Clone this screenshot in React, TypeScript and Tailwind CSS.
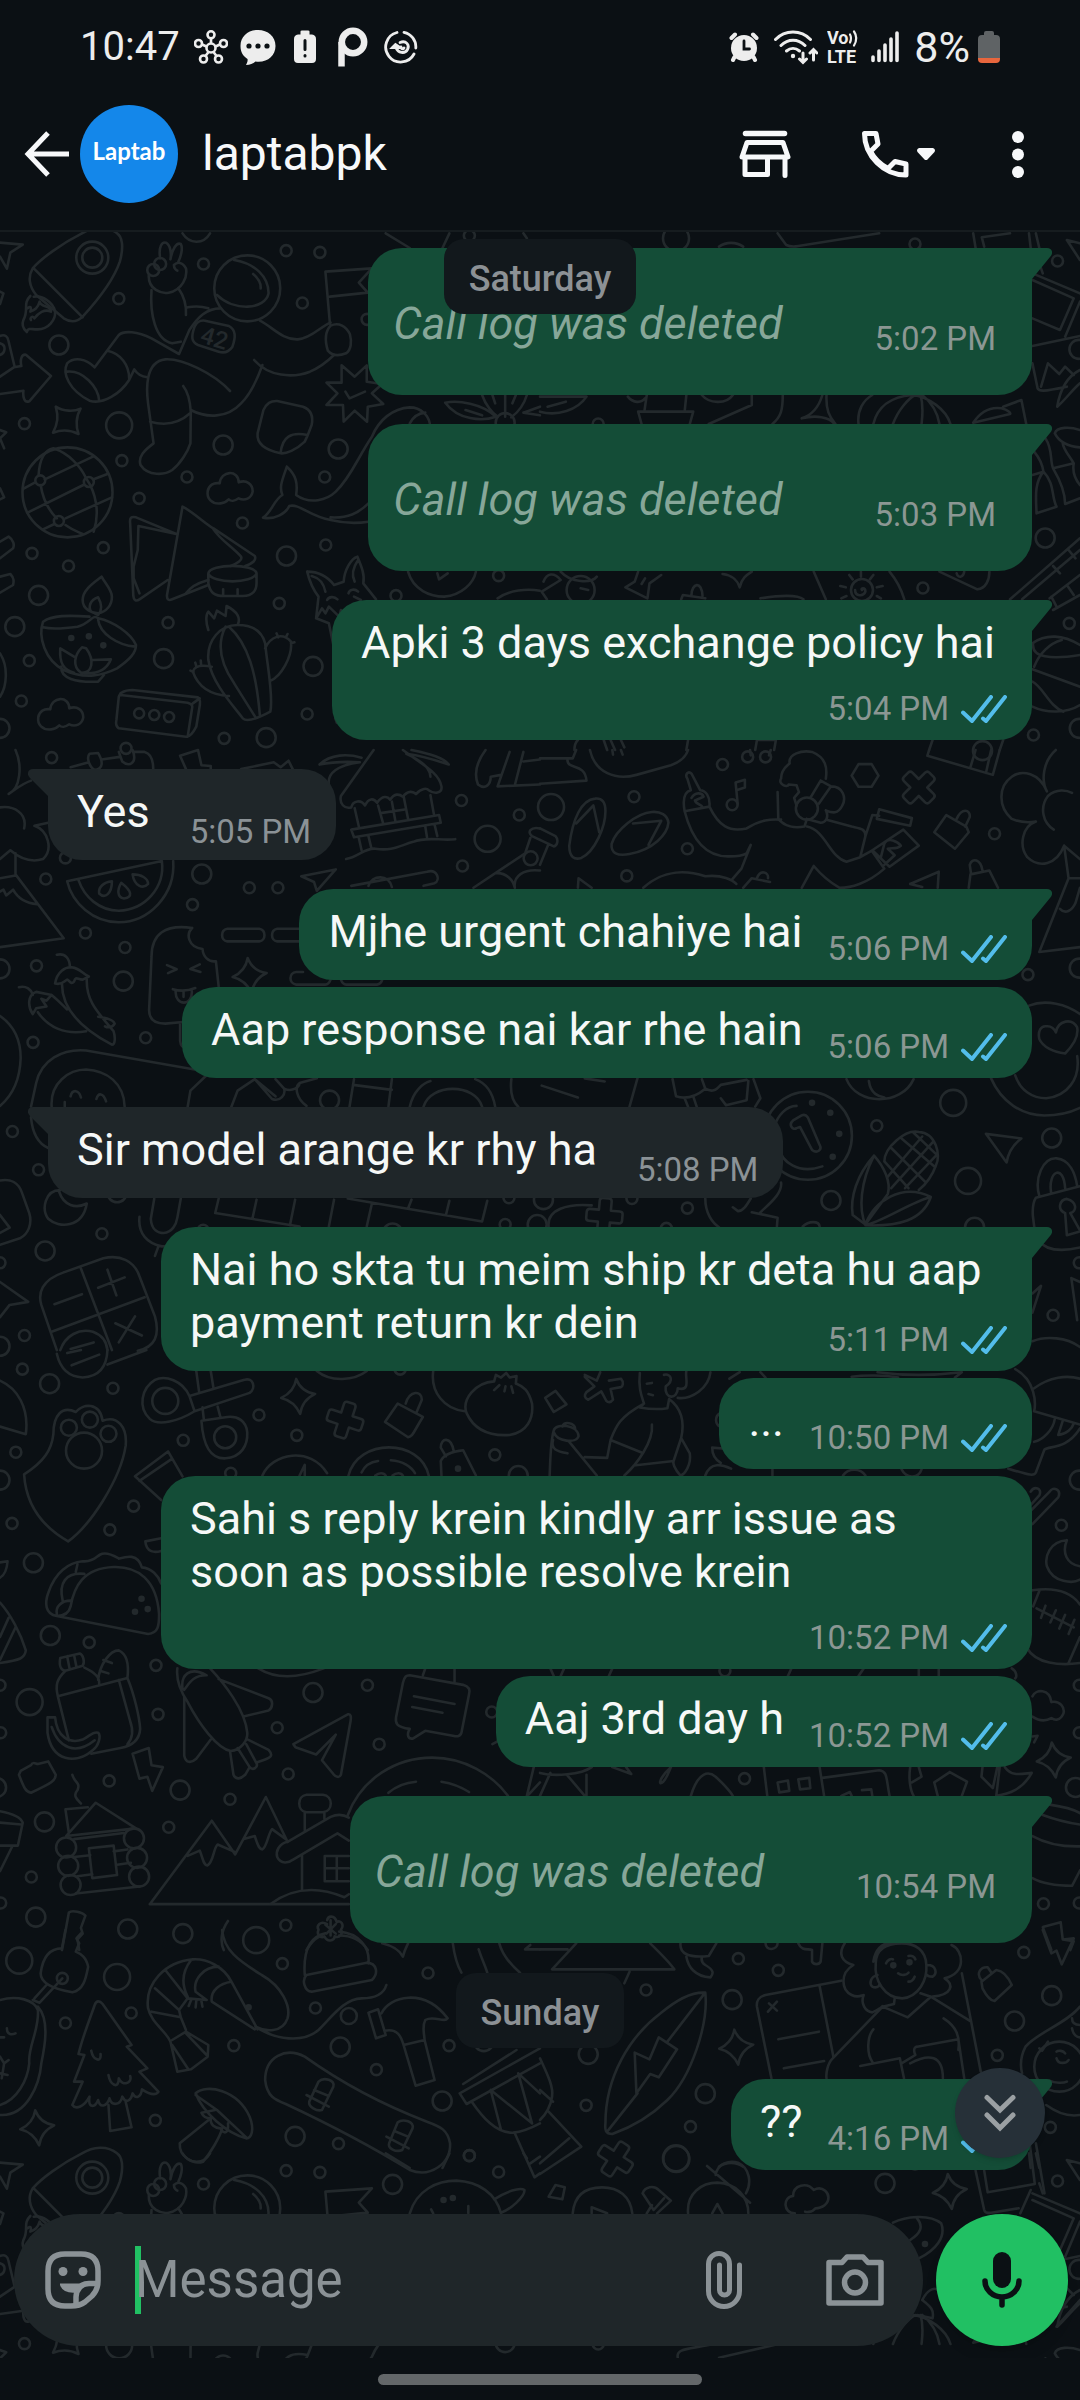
import React from 'react';

type Pt = [number, number];

interface Patch {
  x: number;
  y: number;
  ky: number;
  paths: string[];
  small?: Pt[];
  medium?: Pt[];
  large?: Pt[];
  rings?: [number, number, number][];
  specks?: Pt[];
  sparkles?: Pt[];
  clouds?: Pt[];
  pluses?: [number, number, number][];
}

interface Message {
  id: number;
  text: string;
  time: string;
  from: 'me' | 'them';
  tail?: boolean;
  kind?: 'log';
  meta?: 'inline' | 'below' | 'float';
}

// Doodle drawings are traced on a grid about three times finer than the page
const KX = 2.904;

const PATCH_TOP_LEFT: Patch = {
  x: 0,
  y: -2,
  ky: 3,
  paths: [
    'M0 38L66 44L30 68L20 116L0 80M0 185L10 190L0 222',
    'M238 10C180 40 120 85 95 115C80 140 85 170 105 195L185 265C205 278 225 275 240 260C280 215 330 150 348 95C360 50 355 20 340 10C310 -15 270 -10 238 10M98 115L240 262',
    'M88 198C65 220 85 240 68 270C60 290 72 300 78 306C82 290 95 300 110 298C140 298 162 270 160 245C155 215 120 195 98 200M80 235C90 225 92 235 88 245C100 240 110 235 115 215C120 235 150 225 148 245C130 235 110 250 100 265C95 255 85 265 90 270',
    'M0 440L40 412L62 408C58 390 62 372 75 374L148 438L85 514C70 520 66 500 68 482L0 492M0 318C15 312 22 320 24 330L42 408M0 340C20 345 15 370 0 375',
    'M162 530C185 545 215 545 234 536C220 560 220 590 228 612C205 600 180 598 154 608C168 580 170 560 162 530Z',
    'M112 735C115 690 130 660 155 655C200 670 235 710 250 745C280 790 290 850 272 905M118 765C125 810 145 845 165 865M190 885C210 900 225 905 240 912M70 775L102 757M130 748L270 680M80 848L242 765M272 748L312 732M125 898L158 882M190 865L325 802',
    'M680 90C740 100 780 140 780 190C770 240 680 245 630 195M735 132C750 145 758 160 757 175',
    'M640 235C600 235 575 260 550 300L520 372L440 325C400 305 360 300 345 315L275 412C250 385 215 380 195 400C180 430 200 480 260 512C300 525 350 490 375 450L390 418C400 435 415 440 428 442M440 180C435 250 450 330 500 340L525 335M518 175C535 200 542 225 540 255M545 232C570 227 590 230 605 235M195 425C240 420 285 470 288 512M312 362C350 370 375 405 375 445',
    'M668 483C620 430 530 385 480 388C420 395 425 480 430 520L446 640C420 660 400 680 408 705C430 740 480 735 500 720C525 700 545 665 553 640L554 545C552 510 545 485 532 468M436 575C480 588 520 580 552 550M554 540C600 565 660 565 700 520C730 490 750 440 762 405M738 390C780 440 850 445 900 425C930 412 950 395 970 375M755 272C790 290 820 330 865 328C905 325 935 285 960 278',
    'M960 287C985 275 1005 290 1016 312C1022 335 1020 360 1005 370C985 378 965 378 952 362C944 335 944 305 960 287M945 125L958 280M945 125L1080 115L1042 158L1068 188L958 200',
    'M595 272L665 288C685 300 685 320 675 350C665 365 650 370 635 365L575 345C555 335 555 320 565 290C572 275 580 270 595 272Z',
    'M432 135C430 180 470 192 490 188C530 180 545 140 540 115C530 95 515 95 505 105C505 115 512 122 515 122M465 85C460 50 470 35 482 38C495 45 498 70 495 88C500 60 512 35 525 42C532 55 525 80 518 95',
    'M992 406L1030 440L1065 406V455L1110 462L1080 490L1113 522L1068 530L1066 575L1030 542L998 575L996 525L948 525L980 490L948 458L992 458ZM1003 485L1015 505L1060 485',
    'M805 513L880 530C905 540 910 560 905 585L893 617L885 635C860 660 830 672 815 670C770 660 745 640 748 610L765 540C775 520 785 512 805 513ZM815 668C820 620 845 605 893 615',
    'M833 710C820 750 810 770 820 795C795 810 790 845 764 863C800 870 830 850 840 828C870 820 900 860 960 870C1000 880 1040 880 1070 875M833 710C860 735 865 760 860 795C900 825 950 810 975 785C1020 740 1040 680 1080 620C1100 570 1140 535 1190 532C1225 532 1245 560 1248 580M1190 580C1200 560 1215 550 1235 548M960 862C1010 865 1040 850 1070 820',
    'M512 912L395 862C380 858 376 865 378 880L387 1095C388 1112 395 1115 405 1108L487 1050M402 888L512 912M402 888L400 960L388 1010L388 1045L405 1090M530 830L485 1095C484 1110 490 1112 500 1108L605 1065M530 830C560 845 600 885 620 895L740 978C745 990 735 1000 712 1008M620 898C640 930 680 955 700 980C705 990 690 1000 670 1008M540 1090C560 1060 590 1055 605 1050',
    'M605 1030C610 1000 740 1000 745 1030C735 1062 615 1062 605 1030V1060C610 1090 625 1098 650 1098H705C735 1098 745 1080 745 1060V1030M648 1078V1095M690 1078V1095',
    'M295 1040C270 1060 240 1080 240 1110C240 1140 270 1150 285 1150C310 1145 325 1125 325 1100C325 1080 305 1060 295 1040ZM285 1102C262 1110 255 1130 265 1145L285 1155C297 1140 295 1120 285 1102',
    'M260 1160C200 1155 150 1155 125 1175C110 1220 130 1290 185 1320C250 1350 300 1335 340 1315C375 1290 395 1270 395 1245C380 1210 330 1175 285 1165C270 1150 262 1180 225 1190C190 1195 150 1198 125 1192M285 1170C290 1210 340 1245 393 1250M178 1310C175 1345 220 1358 285 1355L302 1335',
    'M238 1252C215 1275 210 1310 235 1328C270 1330 275 1290 250 1255ZM215 1280L175 1255C172 1300 185 1320 215 1328M270 1290L322 1288C310 1320 280 1332 245 1330',
    'M892 1025C900 1060 910 1080 925 1100L918 1165L955 1180L968 1245M892 1025C930 1025 955 1045 970 1065L998 1055C1000 1020 1020 985 1038 980C1050 1010 1060 1035 1055 1060L1092 1108M905 1038C930 1045 940 1060 945 1085M1030 1055C1018 1030 1030 1005 1040 990M950 1110C955 1100 970 1098 980 1108M1012 1090C1015 1078 1030 1075 1040 1085M918 1165L935 1135L945 1150L955 1130L985 1160L990 1140M1028 1100L1048 1110',
    'M690 1185C640 1185 600 1230 605 1290C615 1360 680 1430 705 1465C715 1475 740 1470 785 1445C795 1400 775 1300 770 1240C760 1200 730 1185 690 1185ZM655 1190C630 1240 640 1300 680 1360L742 1462M665 1190C720 1240 745 1330 755 1460M605 1200C595 1170 600 1150 605 1145L622 1165L630 1142L655 1158L658 1128C690 1145 700 1165 690 1185M615 1310C590 1305 565 1305 560 1325C575 1370 610 1395 665 1398M770 1255C785 1220 820 1205 845 1235C850 1280 815 1340 785 1352M553 1322L562 1326M567 1298L570 1308M583 1292L584 1305M803 1210L808 1222M835 1212L830 1222M855 1237L845 1240',
    'M350 1390C355 1388 360 1380 385 1380L575 1402C582 1405 582 1420 578 1440L570 1490C560 1510 550 1522 540 1520L345 1495C338 1490 336 1480 338 1470L345 1400ZM350 1395L545 1418C560 1422 560 1430 557 1440L545 1520M560 1420L580 1405',
    'M0 775L12 802L0 808M0 600L18 607L0 625L12 655M0 935L25 920C40 930 42 945 38 955L0 985M0 1040L30 1032C42 1045 40 1055 38 1065L0 1088M0 1270C25 1310 20 1370 0 1400M530 10C550 42 590 45 610 10M1120 10L1190 54M1305 10L1285 54M1520 10L1530 25',
    'M1293 518C1330 510 1400 520 1440 560C1400 575 1330 570 1293 518ZM1352 540L1400 556M1400 495C1410 525 1430 550 1445 560M1430 495L1438 520M1467 495V560M1498 495L1488 520M1530 495C1520 530 1500 550 1485 562M1520 548L1568 530M1520 548L1568 556',
    'M1185 1025C1200 1080 1250 1100 1290 1100C1340 1095 1375 1060 1382 1025M1270 1030L1275 1048L1300 1030M1445 1105C1480 1080 1530 1075 1568 1082M985 1400C970 1430 970 1460 978 1478',
  ],
  small: [[831, 62], [929, 67], [591, 102], [345, 206], [878, 219], [71, 581], [354, 692], [543, 741], [943, 741], [404, 805], [704, 879], [93, 970], [946, 945], [300, 953], [199, 1008], [488, 1178], [811, 1120], [85, 1292], [62, 1413], [892, 1452], [651, 1525], [1150, 1097], [1448, 1037], [1363, 17], [1066, 268], [366, 1555]],
  medium: [[171, 345], [648, 645], [982, 657], [832, 978], [112, 1096], [43, 1190], [475, 1286], [909, 1309], [773, 1523], [1467, 578], [0, 1495]],
  large: [[346, 586]],
  rings: [[268, 83, 16], [268, 83, 10], [196, 787, 45], [718, 175, 33], [445, 120, 6], [465, 102, 6], [117, 751, 5], [258, 756, 5], [171, 873, 5], [404, 1450, 5], [448, 1455, 5], [491, 1461, 5]],
  specks: [[207, 1224], [258, 1219], [300, 1246]],
  clouds: [[667, 778], [175, 1456]],
};

const PATCH_TOP_RIGHT: Patch = {
  x: 540,
  y: -2,
  ky: 3,
  paths: [
    'M690 10L715 45C730 52 740 50 750 48L985 10M1258 10L1265 54M1290 50L1283 22L1365 10M1420 10L1425 54M1440 10L1450 54M1530 30L1568 90M1530 30L1568 40M520 50C540 35 570 35 590 50',
    'M1430 130L1568 190M1450 100L1460 130M1430 150L1550 205L1510 300L1430 265M1568 215L1525 320M1430 348L1568 318M1430 400L1445 475C1450 485 1460 485 1530 470M1455 470L1475 400L1508 432L1525 410L1550 435M1568 420C1530 440 1510 480 1502 530C1525 510 1545 480 1568 460',
    'M0 545C50 560 110 540 135 500L0 500M22 530L75 515M255 500C270 520 295 520 305 505M310 495L303 545M425 495L420 545M285 545H445L435 582M285 545L295 582M470 495C490 520 540 525 560 495M615 495V525L490 582M705 495C705 540 700 560 675 582M820 495C810 530 790 555 760 565C800 555 840 560 855 582M832 495C830 540 840 560 858 582',
    'M925 582C920 540 940 510 965 495M968 582C980 530 1020 500 1080 495C1130 500 1180 540 1192 582M1025 582C1040 540 1070 505 1090 495M1105 495C1115 530 1110 560 1108 582M1110 495C1140 520 1155 550 1160 582M1258 578C1280 545 1310 530 1340 535C1360 540 1368 550 1365 552L1258 578M1345 530L1398 510L1412 582',
    'M1495 610C1500 590 1540 590 1568 600M1495 610C1510 640 1540 650 1568 652M1468 625C1490 660 1480 690 1490 715L1550 700C1540 680 1520 660 1518 640M1435 665C1455 690 1460 710 1462 725L1430 735M1462 725C1435 760 1440 800 1442 850L1500 830C1485 800 1495 760 1462 725M1490 715C1510 750 1525 790 1525 822L1568 805M1550 700C1545 730 1560 755 1568 765',
    'M1365 1108L1568 925M1400 1108L1568 960M1480 1105L1568 1035M1490 1140L1568 1095M1490 1008L1510 1030M1535 960L1555 985M1485 1100L1500 1130M1530 1065L1550 1095',
    'M1430 1240C1470 1210 1520 1215 1568 1245M1432 1245C1430 1280 1480 1290 1568 1275M1430 1318L1568 1370M1430 1355C1460 1370 1480 1430 1520 1445M1430 1430C1470 1450 1530 1450 1568 1425M1435 1310C1450 1270 1480 1240 1515 1230',
    'M10 1055C20 1030 40 1025 60 1050L5 1085L20 1108M60 1025C90 1060 150 1060 165 1040M118 1075L140 1080M285 1025L275 1055L248 1072L312 1105L318 1060L352 1035M305 1045L295 1062M410 1108L415 1095L480 1105M440 1095C440 1060 470 1050 472 1098M530 1032C560 1035 575 1055 580 1072C585 1045 600 1035 615 1025M795 1025L830 1108M1015 1025C1035 1050 1050 1080 1058 1108',
    'M935 1080C930 1075 945 1070 945 1085C940 1100 915 1100 915 1080M932 1025V1040M898 1035L908 1048M968 1035L958 1048M872 1068L888 1072M995 1068L978 1072M875 1105L890 1098M990 1105L978 1098M1160 1025L1270 1078C1295 1075 1305 1050 1305 1025M1210 1030C1215 1048 1230 1040 1232 1025M640 1105C700 1095 750 1095 765 1108',
    'M100 1560C100 1545 105 1535 110 1530M185 1530L195 1560M205 1530L218 1560M235 1530L245 1552M430 1530L425 1560M625 1560L630 1530H685L680 1560M1130 1560L1140 1530M1345 1530L1335 1560',
  ],
  small: [[1089, 42], [1503, 93], [1112, 1074], [1537, 1180], [1433, 1515], [169, 582]],
  medium: [[1467, 924], [1566, 1495], [1565, 358], [1285, 1562]],
  large: [[395, 25]],
  rings: [[118, 1080, 14], [935, 1080, 11]],
};

const PATCHES: Patch[] = [
  PATCH_TOP_LEFT,
  PATCH_TOP_RIGHT,
  {
    x: 0,
    y: 518,
    ky: 2.613,
    paths: [
      'M45 0C65 40 60 100 25 115C50 100 60 90 90 80M0 150C40 145 80 165 70 205M100 198L140 190M100 198C140 210 155 260 125 285C90 295 60 285 30 262L0 285M45 270V325L185 492L0 515M0 335L45 328M0 370L10 365L18 380L38 365C50 385 70 400 108 403',
      'M195 343L470 290M195 343C210 400 270 450 345 450C430 450 510 380 503 290M228 340C245 385 290 420 345 420C420 418 480 360 470 290M325 343C300 345 285 360 288 375C305 390 325 375 325 343ZM352 347C340 365 340 385 360 388C385 385 385 370 352 347ZM385 325C410 325 430 335 430 350C415 365 390 355 385 325Z',
      'M558 465C480 455 440 480 440 540L433 680C433 705 450 715 480 715L540 710M558 465C540 480 545 515 588 520C590 540 605 555 627 552L635 618M485 562L513 573L488 583M580 560L553 572L582 580M502 625C520 630 545 630 567 622M510 630C508 670 560 670 557 630M533 630V645M523 713V760C525 775 530 778 540 778',
      'M660 467H753C773 470 773 498 753 500H660C640 498 640 470 660 467M880 467H805C785 470 785 498 805 500H880M960 600C955 612 950 613 945 613H860C838 610 838 582 860 580H880M990 600C995 612 1000 613 1005 613H1095C1102 612 1108 607 1110 600',
      'M165 535C190 530 203 545 203 568M160 610C165 580 190 565 210 568C230 570 240 585 258 592L240 600C225 600 220 590 215 605C205 615 200 600 195 600C185 605 180 615 160 610M180 612C180 680 240 730 325 770C335 770 335 750 330 735C290 690 250 660 252 600M55 620C75 615 90 625 95 640M95 690C80 670 80 640 105 632L150 640L135 655L120 650L135 670L105 675ZM110 685C140 725 190 745 250 735M150 640C170 655 180 665 195 678M285 697C310 700 330 705 333 715C325 728 310 725 305 722',
      'M0 695C40 720 60 760 60 805C58 860 40 900 0 930M90 932L105 870C120 810 180 780 250 785L565 835M150 932C145 870 200 835 250 835C310 838 360 870 362 932M205 905C210 885 230 888 235 908M280 912C285 895 300 895 308 918M188 920V932M90 960C95 1010 115 1030 140 1040',
      'M545 932L553 890L600 850M672 932L690 890L740 860L800 905M740 860L790 912C815 920 830 900 825 885L800 860M825 885C850 895 870 880 870 870M890 930C860 910 855 880 870 870L920 858M1015 932L1028 860M1128 932L1138 860M1025 875L1138 888M1190 932C1200 890 1230 870 1250 865M1438 932C1430 890 1410 870 1380 860M1230 932C1250 870 1380 870 1400 932M1485 860C1480 900 1490 920 1505 932',
      'M205 45L258 32M260 10C250 20 260 45 275 52C300 50 300 30 285 8ZM345 5L355 30C375 45 400 35 385 0M295 25L348 18M390 5L420 5C440 10 445 30 445 50M540 50L523 15L575 0L585 40L612 42V50M700 50L795 32L815 45L838 28L850 50',
      'M1085 0L990 120C985 140 1000 155 1020 150C1025 130 1050 130 1060 145C1070 125 1085 125 1095 138C1110 118 1125 120 1133 130C1145 112 1160 115 1170 122C1185 105 1200 108 1208 115C1225 98 1240 100 1245 105C1260 115 1285 115 1282 95C1275 60 1230 40 1170 0M928 38C960 10 1010 10 1050 20M928 38C970 30 1010 30 1045 32M1045 32C980 40 950 60 955 90M1195 0C1250 10 1290 20 1303 38C1260 25 1220 15 1180 10M1180 10C1230 30 1250 50 1250 70',
      'M1030 152L1042 200M1020 208L1275 170L1280 190L1028 228ZM1098 145L1112 190M1172 120L1185 180M1138 135L1148 185M1105 165L1180 155M1250 118L1260 168M1042 230L1050 262M1070 225L1078 255M1235 200L1240 228M1262 195L1270 225M1005 285C1040 280 1060 255 1090 258C1140 265 1160 250 1200 240C1240 225 1280 238 1322 233',
      'M1410 0C1385 30 1375 60 1388 90C1410 105 1425 90 1425 70L1455 65M1480 5L1445 95L1568 90M1520 5L1495 92M1520 30L1568 25M1375 360L1525 270L1540 230M1440 322C1470 320 1490 340 1495 360M1568 315C1520 310 1490 330 1495 360M1568 205C1540 200 1530 215 1545 225L1568 235M875 330L975 312L920 368L912 345ZM1020 355L1240 318C1270 310 1280 340 1262 348L1230 355M1070 355C1080 325 1130 325 1138 358',
      'M175 1150C130 1150 120 1200 140 1225C170 1250 240 1250 252 1185C220 1200 185 1190 172 1155M448 1172L438 1225C440 1255 460 1262 475 1262C500 1260 512 1240 515 1222L525 1172M405 1220C400 1265 430 1290 470 1297C485 1297 495 1290 500 1285M460 1297L450 1322M635 1172L625 1210L870 1245M745 1175L733 1225M857 1175L842 1242M970 1175L955 1245M1010 1172L1400 1232L1415 1178M1080 1185L1065 1245M1195 1175L1185 1198M1305 1178L1295 1215',
      'M0 1125C30 1120 55 1130 65 1160L85 1210C95 1240 80 1265 60 1275L0 1293M0 1215L28 1248L0 1262M0 1390L82 1442L28 1450L0 1482',
      'M185 1365L300 1328C350 1318 390 1335 405 1375L450 1480C465 1530 450 1560 400 1570M185 1365C120 1385 110 1420 120 1450L165 1568M235 1355L325 1568M150 1520L420 1430M158 1448L238 1422M285 1405L362 1378M312 1358L338 1425M335 1498L412 1530M392 1480L345 1548M175 1568C190 1530 230 1510 270 1520C300 1530 310 1550 312 1568M205 1565L272 1548',
    ],
    small: [[150, 20], [133, 337], [724, 360], [807, 360], [559, 404], [248, 478], [363, 516], [106, 564], [96, 764], [423, 752], [36, 997], [112, 1097], [296, 1264], [71, 1530], [1340, 132], [1508, 170], [1343, 303], [0, 1340], [190, 282], [590, 1255], [1467, 1240], [1478, 1170]],
    medium: [[586, 324], [358, 604], [0, 572], [957, 915], [131, 1309], [340, 1157], [1140, 1262], [1560, 1240], [0, 1558]],
    large: [[1416, 232]],
    rings: [[1541, 283, 7]],
    sparkles: [[725, 588]],
  },
  {
    x: 540,
    y: 518,
    ky: 2.613,
    paths: [
      'M145 0C160 60 220 80 280 65L380 40C410 30 425 15 430 0M0 22H95L105 0M80 22C75 55 130 30 135 80L0 88M210 0L212 12M235 0L240 12',
      'M160 127C120 130 95 180 85 250C85 280 100 288 120 282C160 265 190 200 190 160C190 135 180 125 160 127ZM155 145L105 192M155 145L172 215M325 162C280 165 220 210 208 245C205 270 225 278 260 272C330 260 370 220 373 190C370 170 350 160 325 162ZM270 192L352 185L315 248',
      'M420 160L492 148C495 120 480 105 465 105L440 62C430 52 420 65 428 75L438 105C415 110 415 135 420 160C440 230 480 280 550 278C570 278 590 275 600 270L612 248L585 310L558 338M492 148C520 200 550 215 600 205C640 182 670 180 700 182M440 125C450 110 470 110 475 122L450 132C455 145 470 140 472 150M574 140L568 85L595 78V98L570 105M612 14L610 0M665 14L670 0',
      'M700 75C700 50 720 40 725 35C720 10 760 0 790 5C830 20 835 45 830 75M700 75C690 90 720 100 722 90L745 92L752 110L738 125L745 145M690 110L692 180C710 200 740 205 768 200L775 180M815 80L845 95C880 95 890 125 878 145C865 168 850 165 830 158M815 80L785 125M845 95L810 140M830 158C840 175 830 190 815 190L775 180',
      'M775 200C830 210 840 280 890 292L930 280L945 225C945 205 930 205 905 200L835 183M945 225L965 170L985 172M985 155L1080 178L1075 198L978 180ZM965 262L1055 208L1100 250L1015 305ZM990 280L1000 245C1010 225 1040 240 1048 250C1035 260 1020 255 1010 258L1030 275L1000 300M930 280L965 262M965 265L1000 310C950 350 900 360 870 360M760 360L795 303C820 330 840 345 870 360',
      'M925 37H963L983 67L963 96H925L905 67ZM1180 170L1145 215L1205 258L1245 215L1238 200ZM1210 180C1225 150 1250 155 1248 175L1235 200M1245 360L1250 325L1305 315L1330 360M1252 325L1248 300C1255 280 1280 285 1285 315M1130 0L1125 15L1315 65L1335 0M1265 0L1250 45M1310 0L1295 60',
      'M1498 0C1460 30 1455 80 1472 108C1450 60 1400 50 1370 70C1330 95 1330 150 1370 180C1395 190 1420 190 1440 187C1400 200 1390 250 1415 280C1450 310 1500 300 1522 250L1568 285M1492 208C1460 190 1450 150 1475 120C1500 100 1530 105 1545 112M1522 250L1535 335H1568M1535 335L1450 528L1568 515M1510 415C1525 430 1545 420 1555 400L1568 360',
      'M1075 350L1158 318L1155 360M1075 350L1110 358M300 360C360 310 430 315 480 330C530 325 560 340 570 350M590 360L615 335L668 345M630 335C640 310 665 320 662 335M110 360L112 335L150 360M0 300L25 245M0 205L45 225C55 235 50 250 40 252L0 235',
      'M1420 668C1470 650 1530 665 1568 690M1310 858C1340 920 1400 955 1465 955C1510 955 1545 945 1568 935M1380 850C1395 890 1430 910 1470 910C1530 905 1570 860 1560 800M1525 793C1490 790 1460 775 1450 755C1445 735 1455 720 1470 722C1485 720 1495 730 1498 738C1505 705 1545 700 1560 725C1565 750 1545 775 1525 793Z',
      'M680 985C690 955 715 930 745 930M820 1088C750 1110 700 1075 695 1040M760 955L735 968C720 980 735 995 745 988L755 985L790 1045C805 1055 820 1045 812 1032L778 960Q770 950 760 955Z',
      'M970 1060C920 1110 900 1170 908 1215L945 1240C925 1200 930 1130 970 1060C1000 1090 1020 1130 1010 1160L945 1240C970 1180 1050 1130 1135 1168C1110 1230 1040 1245 945 1242C1000 1230 1080 1180 1135 1168',
      'M1000 1075C1000 1040 1060 990 1100 998C1150 1000 1165 1060 1150 1085C1140 1110 1120 1135 1100 1150M1020 1040L1120 1130M1050 1015L1148 1090M1000 1075L1070 1145M1085 1000L1155 1060M1010 1115L1110 1010M1020 1145L1140 1025M1060 1145L1150 1060',
      'M1295 1003L1398 1015C1375 1030 1360 1050 1355 1078ZM1568 1140L1440 1170C1425 1190 1430 1240 1445 1280C1470 1310 1520 1310 1568 1300M1450 1165C1435 1120 1460 1065 1500 1067C1540 1070 1555 1110 1560 1140M1484 1155C1475 1100 1520 1080 1525 1145M1525 1210C1500 1200 1510 1175 1530 1173C1560 1180 1560 1205 1540 1210L1568 1255M1525 1210L1530 1268L1568 1258',
      'M5 877L110 908M130 858L188 866M283 858L260 932M385 860L395 905C430 915 460 900 480 885L470 860M480 885C500 895 510 890 525 875L600 862M420 910L430 932M445 905L455 932M525 910L540 928L600 915L605 865M620 860L640 910L625 932M890 860C920 930 1050 930 1085 860M955 865C960 900 985 905 1000 908',
      'M480 1172C480 1210 500 1235 520 1247M560 1195L575 1205C590 1205 600 1190 612 1172M700 1130C705 1160 660 1190 640 1208M615 1208L690 1222L688 1245M25 1245C20 1200 80 1185 150 1190M763 1245C780 1230 810 1230 812 1245M1430 1420L1455 1400L1430 1470M1543 1380L1568 1390M1543 1380L1560 1490M1430 1545C1470 1530 1530 1535 1568 1560',
    ],
    small: [[530, 38], [273, 122], [428, 258], [252, 329], [1320, 219], [1417, 587], [978, 982], [428, 1197], [1490, 1477], [267, 1172], [558, 143], [603, 18], [655, 18], [367, 1250], [1566, 1340]],
    medium: [[845, 1177], [1486, 1014], [1566, 570], [1262, 1247], [10, 1175]],
    large: [[32, 149], [1200, 922], [1243, 1126]],
    rings: [[775, 153, 11], [778, 1008, 44]],
    specks: [[790, 922], [843, 948], [869, 1003], [850, 1063]],
    pluses: [[1100, 98, 45], [187, 1218, 5]],
  },
  {
    x: 0,
    y: 1118,
    ky: 2.613,
    paths: [
      'M165 10C175 50 200 70 240 72C280 70 310 50 312 0M195 8L235 0M208 40L288 12M312 38L425 0M0 80C50 100 85 150 75 220L0 200',
      'M198 500C120 460 75 400 70 325C130 290 150 260 155 220C155 170 180 145 220 162C240 140 290 135 298 185C340 170 370 200 365 250C350 340 260 460 198 500Z',
      'M550 120C530 80 480 65 450 78C410 100 400 150 435 180C460 200 520 185 565 160L550 120L710 78C735 70 745 100 725 112L565 160M585 185C590 250 610 285 655 283C700 280 720 250 718 215C715 185 690 172 660 175ZM570 55L578 108M612 55L620 100M588 150L592 182M632 148L640 175',
      'M1155 140L1118 188L1185 228C1200 225 1200 215 1228 175ZM1178 140C1190 105 1225 105 1225 130L1210 162M1282 328L1280 290C1290 270 1320 265 1345 262L1382 328M1295 278L1280 255C1280 228 1310 225 1318 265',
      'M1258 55C1250 110 1290 155 1350 160M1435 82C1380 85 1340 130 1355 165C1380 215 1430 225 1480 222C1530 215 1550 180 1545 140C1535 105 1520 95 1500 88M1435 82L1440 65L1455 72L1470 60L1480 72L1500 68L1498 88M1450 92L1435 105M1468 95L1465 108M1485 95L1490 112M920 55C960 85 1030 80 1065 55',
      'M762 328C790 270 900 250 950 322M870 328L885 300V328M1012 328C1040 230 1220 230 1245 328M1050 320C1060 300 1080 292 1098 290M1135 288C1170 290 1195 305 1205 322M1090 328C1100 320 1115 320 1120 328M1140 328C1150 320 1165 320 1170 328M392 330L488 265L530 330M392 330L468 392M405 342L498 285',
      'M165 695C130 690 130 660 140 635C160 580 200 555 240 552C270 555 280 540 290 535C310 525 335 540 345 545C365 540 400 530 412 568C440 570 460 590 468 610M165 695L430 742C460 740 462 720 462 690C455 600 400 565 330 567C240 570 215 620 205 670C200 690 180 695 165 695ZM220 580L225 560M182 655C170 610 190 580 245 585M165 690C160 670 180 655 205 655M422 500L468 492M422 500C425 530 450 530 468 525',
      'M0 660C30 690 60 740 75 785C72 805 60 810 0 818M0 750L25 700M0 810L45 725M0 555L22 552C20 575 10 590 0 595',
      'M175 805C170 830 180 838 190 838L240 825C248 815 240 795 232 793ZM195 800L202 832M215 797L222 828M190 838C165 860 160 875 168 905L200 1020M245 830C270 840 290 855 288 872M168 905L370 857C390 900 405 960 407 990C405 1020 380 1035 350 1040L265 1055M345 862L378 970C390 1000 380 1020 370 1030M285 862C290 820 320 785 345 785C370 795 375 820 370 857M300 810L325 818M290 838L315 845',
      'M138 960H160C165 1010 200 1030 240 1018C260 1010 270 995 285 1000C295 1010 285 1035 270 1045C220 1085 150 1075 138 1000ZM150 985C170 1040 220 1060 275 1020',
      'M385 1055L432 1040L440 1085L473 1090L442 1152L428 1115L405 1120ZM60 1100L90 1085C95 1075 100 1080 110 1082L140 1075L162 1110C160 1125 155 1130 90 1157C75 1155 70 1145 55 1110ZM210 1110C215 1130 235 1130 225 1150C210 1165 225 1175 235 1185',
      'M515 832C510 870 530 900 545 920C580 980 630 1040 670 1048C700 1045 720 1020 718 1000C712 940 650 870 610 832M530 885C525 850 550 825 600 850C560 850 550 870 535 888M635 860L780 910C795 915 792 935 780 942L710 957M535 905V1060C540 1080 555 1080 570 1068L612 1018M668 1048L678 1110C685 1125 700 1120 712 1110L725 1090M720 1018L780 1045C795 1060 785 1065 770 1070L745 1078M690 1040L725 1090C735 1100 750 1090 745 1080L715 1030M750 832C800 860 860 860 940 832',
      'M852 1030L1010 952C1020 950 1020 960 1018 970L990 1110C985 1120 975 1115 968 1108L935 1072L975 1005L918 1057L858 1038Z',
      'M1190 850L1345 875C1365 880 1365 890 1362 900L1340 1000C1335 1012 1325 1010 1315 1008L1235 995L1200 1015C1185 1018 1180 1005 1190 990C1150 985 1148 975 1150 960L1170 870C1175 852 1180 850 1190 850ZM1202 905L1320 925M1197 933L1285 948M1228 850L1235 832M1320 870V832',
      'M1010 1215C1050 1120 1150 1065 1255 1065C1350 1065 1430 1110 1475 1165M1128 1157C1150 1140 1180 1130 1208 1128M1282 1128C1310 1132 1340 1142 1362 1155M1530 1165L1550 1090M1535 1162L1568 1130M1430 1030L1450 1020',
      'M192 1270L278 1183L395 1250L192 1270M190 1200L255 1195M190 1200L200 1262M215 1325L262 1320M330 1310L370 1305M225 1375L268 1370M340 1345L380 1340M220 1420L405 1402M215 1278L360 1262M258 1302L330 1295L340 1372L268 1380Z',
      'M435 1448H1013M435 1448L615 1230L683 1318L772 1168L835 1285M545 1322L580 1308C590 1330 590 1345 602 1347C620 1340 620 1300 632 1292L683 1312M708 1278L740 1270C750 1300 755 1305 762 1305C775 1300 780 1260 790 1252L830 1278',
      'M835 1285L960 1220C980 1212 1000 1215 1013 1222M835 1285C810 1290 800 1310 805 1325C815 1345 840 1340 850 1332L980 1263L1013 1282M877 1320V1410M885 1255V1208M942 1225V1208M890 1162H938C968 1165 968 1205 938 1208H890C862 1205 862 1165 890 1162M943 1322H1013M943 1322V1388H1013M978 1322V1388M943 1354H1013M787 1447C850 1405 920 1400 1000 1430L1013 1422',
      'M0 1205C30 1210 60 1220 66 1235L52 1295H0M0 1235L62 1240M35 1298L0 1362M200 1470C210 1462 240 1470 248 1478L235 1510L240 1525L225 1540L230 1568M200 1470L180 1568M662 1492C640 1520 640 1550 650 1568M890 1568C910 1540 920 1535 935 1530M985 1530C1030 1530 1055 1550 1068 1568',
      'M950 1500C930 1490 918 1505 925 1515C918 1530 935 1538 942 1532C950 1548 970 1545 972 1532C985 1538 998 1525 990 1515C1002 1502 988 1488 978 1495C972 1475 952 1478 950 1490M945 1502L975 1525M975 1500L948 1525M960 1490V1530',
    ],
    small: [[65, 50], [328, 100], [752, 170], [862, 223], [532, 236], [46, 267], [388, 408], [35, 453], [319, 470], [259, 764], [453, 824], [459, 952], [1067, 876], [805, 987], [1101, 1030], [317, 1126], [837, 1108], [668, 1174], [490, 1247], [91, 1377], [830, 1503], [2, 1445], [2, 1000], [1437, 274], [1428, 946], [0, 876], [670, 322], [1162, 50]],
    medium: [[144, 88], [97, 556], [146, 746], [909, 895], [523, 1150], [129, 1233], [104, 1482], [371, 1513], [531, 1525], [1505, 328], [0, 340], [-10, 1143]],
    large: [[86, 920], [744, 1542]],
    rings: [[200, 203, 8], [261, 182, 8], [315, 219, 8], [244, 263, 18], [480, 133, 13], [654, 228, 11], [192, 1300, 10], [198, 1348, 10], [205, 1398, 10], [389, 1276, 10], [398, 1327, 10], [404, 1376, 10]],
    specks: [[411, 650], [392, 684], [429, 677], [1330, 310]],
    sparkles: [[866, 120]],
    pluses: [[1002, 183, 18]],
  },
  {
    x: 540,
    y: 1118,
    ky: 2.613,
    paths: [
      'M45 107L77 142L40 162L15 125ZM130 65L165 80L175 58M200 80L235 75C245 85 240 95 235 97L205 102L212 130C205 138 198 138 192 132L178 108L140 130C128 125 128 118 135 110L158 95L130 70',
      'M290 60C285 100 295 120 302 140C230 175 220 200 205 235L295 268M290 150C320 155 350 155 370 152L375 128M302 140L290 150M325 195C330 240 280 300 245 328M375 128C415 155 420 190 410 230L388 290L272 302M410 230L435 270C440 300 420 325 408 328C390 310 385 295 388 290M205 235L195 282L130 280M40 210C30 240 30 290 28 328M40 210C45 190 110 195 112 225C105 245 50 240 40 215M38 235C30 260 50 265 80 270M85 240L165 328M65 200C70 185 100 190 102 205M360 65C380 60 390 80 365 95C360 130 400 130 400 100C440 110 420 70 425 55M400 125C440 130 490 100 495 58M310 88L325 86M315 115L328 118',
      'M550 75L580 58M640 58L655 72M980 58C1080 70 1160 65 1225 58L1205 72M905 70C940 65 1000 65 1040 72M523 165C505 175 510 195 523 200M500 255L540 258M500 255C500 280 515 290 525 295M480 328C495 290 530 300 555 310M675 328V312M880 328C895 308 930 308 945 328M1050 312C1065 338 1100 335 1108 312',
      'M1380 50C1440 80 1440 140 1435 160M1435 100C1480 70 1530 65 1568 75M1435 160L1568 195M1495 180C1490 210 1460 235 1435 240M1518 185L1505 222C1530 220 1545 205 1550 192M1568 205C1530 260 1480 250 1465 260L1440 320C1435 330 1425 328 1360 310',
      'M1430 455L1505 385C1515 365 1490 355 1480 370L1425 420M1425 405L1450 380C1460 360 1435 355 1425 370M1530 497C1480 500 1465 540 1472 565C1490 610 1550 610 1568 600M1530 497C1515 530 1530 560 1568 565',
      'M1430 628C1490 620 1540 630 1568 665M1450 630L1432 670M1415 780C1440 820 1510 825 1568 818M1568 750L1535 818M1442 675L1550 725M1468 668L1455 700M1498 680L1482 712M1525 692L1508 728M1552 705L1535 742',
      'M1430 905C1440 885 1480 885 1485 920C1510 915 1525 935 1520 950C1510 970 1495 968 1485 962C1470 970 1450 970 1430 958M1430 1010L1445 1008L1435 1025M1100 832V852M1158 832V852M1370 832C1385 840 1385 855 1380 858M30 832L40 852M60 852L70 832M200 852L210 832M720 852L730 832M940 832L925 852',
      'M0 1105C40 1115 120 1110 150 1090M30 1105L0 1165M80 1112L130 1165M135 1110V1165M210 1090L265 1108L250 1090M380 1090C355 1110 345 1130 350 1132C365 1130 375 1100 380 1090M438 1165C460 1100 490 1100 510 1115C540 1140 550 1150 560 1165M650 1090L660 1165M812 1090L825 1165M820 1118L985 1098C1010 1100 1005 1120 1015 1165M690 1130L720 1125L724 1152L695 1156ZM750 1122L782 1118L785 1145L755 1148ZM875 1165L900 1155L905 1165M935 1150L962 1148L965 1165',
      'M1075 1090C1070 1120 1075 1150 1085 1165M1080 1130L1108 1115L1100 1090M1190 1103L1240 1128L1225 1165M1190 1103L1145 1130L1155 1165M1285 1090L1282 1115L1315 1145L1328 1090M1335 1090L1325 1165M1350 1090C1370 1115 1395 1108 1428 1105C1400 1150 1360 1160 1325 1165',
      'M1480 1188C1510 1192 1545 1198 1568 1210M1460 1215C1490 1225 1530 1235 1568 1240M1430 1270C1470 1290 1520 1298 1568 1297M1430 1380C1460 1395 1500 1400 1545 1400L1568 1360',
      'M1485 1568L1460 1508L1512 1495L1518 1540L1550 1545L1540 1568',
    ],
    small: [[1514, 458], [1462, 1447], [1566, 876], [594, 1120], [537, 838], [1566, 1000], [1566, 1445]],
    medium: [[1566, 340], [1555, 1143]],
    sparkles: [[1492, 1070]],
  },
  {
    x: 0,
    y: 1698,
    ky: 3,
    paths: [
      'M190 0L180 55C150 55 125 75 118 130C118 165 170 180 210 187C245 180 250 140 256 110C250 80 235 72 220 65L230 40L222 25L235 10M181 145L115 218L95 210M135 165L100 205',
      'M0 210C50 195 100 210 110 240C115 300 80 350 85 400C80 450 50 510 0 525M110 230C145 270 130 350 120 400C115 460 80 560 0 555M20 295C20 315 35 315 45 310M0 322H12M0 380L12 400L25 390M0 430L22 435M12 400L5 445',
      'M275 225C280 210 290 212 298 222L382 345L368 350L428 415L405 425L460 485C450 500 430 490 412 478C410 500 395 510 385 490C380 515 365 520 355 500C350 525 325 530 318 505C310 530 290 535 285 510C275 535 255 535 260 500C245 530 220 540 210 525L240 455L215 455L245 375L228 372C240 320 260 270 275 225ZM265 362C270 390 295 400 292 372M315 435C320 465 345 480 345 445C355 470 385 460 378 438M315 525L320 603L382 592L365 515',
      'M740 298L615 215C610 180 640 160 672 155C650 110 600 85 560 88C480 95 420 160 430 235C440 280 480 300 495 335L515 425L555 418L603 380L605 345L540 305L500 330M440 245L525 262L540 300M450 175L520 240M480 120L545 205M555 90C525 130 530 170 545 200M635 110C590 110 560 150 568 185L600 210M525 262L520 240L545 205L600 210M500 345L545 415M540 310L600 375M672 155L748 298M555 210L548 228M570 212L568 232M585 214L588 230',
      'M645 0C650 60 690 90 760 135C820 170 845 230 835 265C820 310 770 305 742 290C800 330 880 340 925 300C960 265 1000 205 1050 205C1090 205 1115 190 1122 165M885 135C880 60 900 20 945 10M985 5C1040 10 1075 50 1070 100M890 135L1065 98C1095 100 1100 130 1080 150L905 185C885 185 875 150 890 135Z',
      'M1070 248L1098 238L1120 315L1092 325ZM1108 250C1130 200 1230 170 1300 265C1290 280 1260 255 1235 270C1225 290 1232 310 1233 330L1172 345C1165 320 1155 295 1118 302M1172 345L1207 467L1262 450L1233 330',
      'M568 490C600 460 690 480 725 560C740 600 730 625 715 625C660 610 590 550 568 490ZM568 495L630 540L715 622M625 540L585 548C590 560 600 565 612 565L522 640C520 680 560 705 590 695C610 670 640 620 645 595M612 565C610 585 625 595 640 595C650 615 665 610 662 580',
      'M885 380C830 350 770 380 770 450C775 500 800 510 830 522C950 580 1080 650 1190 720C1250 745 1310 700 1307 640C1300 600 1280 590 1240 575C1100 520 980 450 885 380ZM925 455C940 440 975 450 968 470L935 540C920 545 895 530 898 515ZM890 495L955 530M912 480L955 498M1155 577C1170 565 1205 575 1198 595L1168 660C1150 668 1125 655 1130 640ZM1122 620L1187 655M1145 603L1185 620',
      'M1335 490L1568 355M1335 490L1355 522L1568 400M1345 462L1500 360M1370 515C1400 560 1440 610 1490 608C1520 605 1550 590 1568 580M1425 480L1455 600M1425 480L1545 580M1505 430L1545 580M1505 430L1568 490M1495 610L1552 742L1568 730M1540 700L1568 680',
      'M1190 850C1210 780 1270 752 1325 752C1390 755 1440 790 1455 850M1435 808C1470 785 1510 770 1523 780C1525 800 1480 840 1455 848M1252 838L1258 850M1360 828V850M1315 40C1320 80 1330 110 1340 128M1390 58C1400 90 1410 110 1415 128M1450 40C1460 80 1490 110 1510 128M1525 58H1568M1525 58L1540 45M1110 40C1150 50 1165 70 1170 80C1175 60 1180 50 1185 40',
    ],
    small: [[190, 279], [381, 249], [820, 101], [916, 234], [679, 347], [1243, 129], [1304, 347], [1093, 419], [451, 571], [983, 641], [1363, 677], [1448, 726], [181, 145]],
    medium: [[988, 351], [1284, 513], [857, 619], [1140, 763], [1405, 335]],
    large: [[56, 92], [340, 141]],
    rings: [[1013, 258, 8]],
    specks: [[722, 232], [1288, 810], [1315, 804]],
    sparkles: [[108, 592]],
  },
  {
    x: 540,
    y: 1698,
    ky: 3,
    paths: [
      'M35 118L105 40M320 40C350 70 375 95 390 118H35M0 58H80M245 160L260 125M408 40C405 70 430 85 490 78L512 40M425 80C430 110 450 140 495 142C505 130 505 120 480 105C470 98 468 90 470 82M655 40C655 65 690 60 690 40M750 40C760 65 780 55 790 60V95C795 105 810 105 815 95L820 40',
      'M480 188C490 280 440 440 370 510C320 560 270 590 210 612C190 612 188 600 190 580C190 440 260 320 350 250C390 215 440 185 480 188ZM478 190L370 335M283 490L195 605M275 368L318 388L345 322L398 358L345 442L320 432L280 490Z',
      'M875 152L655 195C635 200 628 215 630 230L672 445M812 168L852 380M665 220L688 242M688 215L662 245M692 328L810 305M708 415L825 393',
      'M975 100C970 150 1000 205 1052 205C1100 200 1125 150 1122 105C1120 60 1090 40 1050 40C1000 40 975 60 975 100ZM968 95C975 50 1000 40 1020 38M885 40C865 70 875 95 910 105C870 130 875 180 905 195C925 205 935 195 940 195C930 220 945 245 965 247C980 240 990 235 995 228M1195 45C1230 60 1240 130 1175 145C1205 165 1195 195 1140 200M980 135C960 140 955 160 965 170C975 175 985 170 985 165M1125 105C1150 105 1155 130 1140 140C1130 140 1125 138 1125 135',
      'M1030 205L1028 222L995 230L1068 262L1135 200L1105 190M995 230L850 385C835 400 830 430 832 445M1135 200L1252 275M968 298C950 320 948 370 965 395M1172 265C1210 290 1220 320 1215 360M930 408L1045 385L1057 445M1050 400L1090 375C1080 350 1095 350 1095 350L1215 328L1232 445M1075 400C1130 370 1170 375 1170 445M1225 130L1280 425M1040 130C1050 138 1065 135 1070 128M1070 155C1080 155 1085 148 1088 140M1005 100C1010 88 1020 85 1025 88M1070 78C1080 75 1088 80 1090 88',
      'M1282 155L1325 120C1340 122 1355 130 1370 165L1320 213C1310 212 1300 205 1285 175ZM1282 150C1265 130 1280 110 1300 112L1312 130M1460 0L1485 70L1500 62L1515 103L1550 25L1525 28',
      'M1568 230C1530 280 1440 310 1410 350C1395 380 1395 410 1400 430M1470 525C1510 555 1540 560 1568 555M1545 265C1545 280 1555 285 1568 285M1545 295C1548 315 1560 322 1568 322M1500 365C1505 360 1520 362 1525 370M1500 385C1505 405 1530 400 1535 390M1480 452C1495 460 1520 460 1530 455M1450 355L1458 362L1475 335',
      'M0 385C20 430 40 470 35 500C30 530 15 555 0 570M25 545L120 650L0 732M0 700L85 625M0 480L38 515M45 765L72 772L65 808L25 800Z',
      'M95 850C100 795 130 772 180 772C230 772 262 800 268 850M150 850V832L195 850M298 790C305 770 330 765 345 780L380 812L340 850M298 790L330 840L360 805M325 825L310 850M430 850C425 790 470 758 515 758C570 760 605 800 605 850M485 708L610 818M510 735C515 700 550 690 575 698C610 715 615 760 598 790M500 850L515 822L530 850M740 850C705 850 705 800 735 798C735 765 775 755 795 780C820 765 845 790 835 815C825 835 800 835 800 835C790 850 770 845 770 845',
      'M1265 722L1290 840C1292 848 1300 850 1310 848L1390 835M1290 722L1300 787L1437 762L1422 640M1440 640L1465 790M1395 850L1425 780M1025 878C1060 860 1130 850 1165 880C1180 920 1150 960 1100 985M1095 865C1115 890 1105 910 1075 930M1500 1190L1568 1110M1110 1110C1130 1070 1150 1075 1155 1080M1110 1110C1135 1130 1145 1140 1140 1165L1095 1155M400 1283C395 1255 430 1258 490 1245M520 1283L680 1245',
    ],
    small: [[576, 86], [692, 121], [1405, 67], [308, 180], [1328, 376], [134, 526], [437, 590], [1482, 592]],
    medium: [[558, 209], [1486, 197], [1378, 273], [140, 373], [480, 491], [1002, 760]],
    large: [[396, 687]],
    rings: [[1508, 410, 25]],
    specks: [[1026, 106], [1073, 97], [1118, 942]],
    sparkles: [[570, 350], [1190, 783]],
    pluses: [[219, 687, 33]],
  },
  { ...PATCH_TOP_LEFT, y: 1918 },
  { ...PATCH_TOP_RIGHT, y: 1918 },
];

const DoodlePatch = ({ p }: { p: Patch }) => {
  const at = ([x, y]: number[]) => `translate(${x / KX} ${y / p.ky})`;
  return (
    <g transform={`translate(${p.x} ${p.y})`}>
      <g transform={`scale(${1 / KX} ${1 / p.ky})`}>
        {p.paths.map((d) => (
          <path key={d} d={d} vectorEffect="non-scaling-stroke" />
        ))}
      </g>
      {p.small?.map((c, i) => <circle key={i} r="5.5" transform={at(c)} />)}
      {p.medium?.map((c, i) => <circle key={i} r="9.5" transform={at(c)} />)}
      {p.large?.map((c, i) => <circle key={i} r="13" transform={at(c)} />)}
      {p.rings?.map((c, i) => <circle key={i} r={c[2]} transform={at(c)} />)}
      {p.specks?.map((c, i) => <circle key={i} r="2" fill="#23292c" transform={at(c)} />)}
      {p.sparkles?.map((c, i) => (
        <path key={i} d="M-2 -17Q3 -4 17 -2Q4 4 2 18Q-4 5 -17 2Q-4 -4 -2 -17Z" transform={at(c)} />
      ))}
      {p.clouds?.map((c, i) => (
        <path key={i} d="M-9 14C-18 15-23 9-22 2C-21-4-16-7-10-6C-9-19 9-20 9-7C17-10 23-5 23 2C22 9 15 12 9 9C5 12 1 12-1 10C-4 13-6 14-9 14Z" transform={at(c)} />
      ))}
      {p.pluses?.map((c, i) => (
        <path key={i} d="M-3 -18H3Q6 -18 6 -15V-6H15Q18 -6 18 -3V3Q18 6 15 6H6V15Q6 18 3 18H-3Q-6 18 -6 15V6H-15Q-18 6 -18 3V-3Q-18 -6 -15 -6H-6V-15Q-6 -18 -3 -18Z" transform={`${at(c)} rotate(${c[2]})`} />
      ))}
    </g>
  );
};

const Wallpaper = () => (
  <svg
    className="absolute inset-0 w-full h-full"
    viewBox="0 0 1080 2126"
    preserveAspectRatio="xMidYMin slice"
    fill="none"
    stroke="#23292c"
    strokeWidth="2.6"
    strokeLinecap="round"
    strokeLinejoin="round"
    aria-hidden="true"
  >
    {PATCHES.map((p, i) => (
      <DoodlePatch key={i} p={p} />
    ))}
    <text x="199" y="110" fontSize="24" fontWeight="500" fill="#23292c" stroke="none" transform="rotate(17 199 110)">42</text>
  </svg>
);

const MESSAGES: Message[] = [
  { id: 1, text: 'Call log was deleted', time: '5:02 PM', from: 'me', tail: true, kind: 'log' },
  { id: 2, text: 'Call log was deleted', time: '5:03 PM', from: 'me', tail: true, kind: 'log' },
  { id: 3, text: 'Apki 3 days exchange policy hai', time: '5:04 PM', from: 'me', tail: true, meta: 'below' },
  { id: 4, text: 'Yes', time: '5:05 PM', from: 'them', tail: true },
  { id: 5, text: 'Mjhe urgent chahiye hai', time: '5:06 PM', from: 'me', tail: true },
  { id: 6, text: 'Aap response nai kar rhe hain', time: '5:06 PM', from: 'me' },
  { id: 7, text: 'Sir model arange kr rhy ha', time: '5:08 PM', from: 'them', tail: true },
  { id: 8, text: 'Nai ho skta tu meim ship kr deta hu aap payment return kr dein', time: '5:11 PM', from: 'me', tail: true, meta: 'float' },
  { id: 9, text: '...', time: '10:50 PM', from: 'me' },
  { id: 10, text: 'Sahi s reply krein kindly arr issue as soon as possible resolve krein', time: '10:52 PM', from: 'me', meta: 'below' },
  { id: 11, text: 'Aaj 3rd day h', time: '10:52 PM', from: 'me' },
  { id: 12, text: 'Call log was deleted', time: '10:54 PM', from: 'me', tail: true, kind: 'log' },
];

const LAST_MESSAGE: Message = { id: 13, text: '??', time: '4:16 PM', from: 'me', tail: true };

const Ticks = () => (
  <svg className="w-[46px] h-7" viewBox="0 0 46 28" fill="none" stroke="#53bdeb" strokeWidth="4" strokeLinecap="round" aria-label="Read">
    <path d="M2 17.500L11 26L30 2" strokeLinejoin="miter" />
    <path d="M22 23.500L25 26L44 2" />
  </svg>
);

const Tail = ({ mine }: { mine: boolean }) =>
  mine ? (
    <svg className="absolute left-full top-0 w-5 h-8 text-[#144d37]" viewBox="0 0 20 32" fill="currentColor" aria-hidden="true">
      <path d="M-1 0H15C20 0 22 5 18 9L0 31H-1Z" />
    </svg>
  ) : (
    <svg className="absolute right-full top-0 w-5 h-8 text-[#1f2629]" viewBox="0 0 20 32" fill="currentColor" aria-hidden="true">
      <path d="M21 0H5C0 0-2 5 2 9L20 27H21Z" />
    </svg>
  );

const Bubble = ({ m }: { m: Message }) => {
  const mine = m.from === 'me';
  const color = mine ? 'bg-[#144d37] self-end' : 'bg-[#1f2629] self-start';
  const corner = m.tail ? (mine ? 'rounded-tr-none' : 'rounded-tl-none') : '';
  const space = m.tail ? 'mt-[29px]' : 'mt-[7px]';
  const shell = `relative rounded-[34px] max-w-[871px] first:mt-0 ${color} ${corner} ${space}`;

  if (m.kind === 'log') {
    return (
      <div className={`${shell} flex items-start pl-[25px] pr-9 pb-9`}>
        <p className="pt-[49px] text-[45px] leading-[53px] italic text-[#87a799]">{m.text}</p>
        <time className="pt-[71px] ml-[92px] text-[33px] leading-10 text-[#8b9793]">{m.time}</time>
        <Tail mine={mine} />
      </div>
    );
  }

  const meta = (
    <span className="flex items-center gap-3 shrink-0">
      <time className={`text-[33px] leading-10 ${mine ? 'text-[#8b9793]' : 'text-[#8b9296]'}`}>{m.time}</time>
      {mine && <Ticks />}
    </span>
  );

  if (m.meta === 'float') {
    return (
      <div className={`${shell} flow-root pt-4 pb-[11px] pl-[29px] pr-[25px] text-[45px] leading-[53px] text-[#f6f8f7]`}>
        {m.text}
        <span className="float-right mt-6">{meta}</span>
        {m.tail && <Tail mine={mine} />}
      </div>
    );
  }

  if (m.meta === 'below') {
    return (
      <div className={`${shell} flex flex-col items-end pl-[29px] pr-[25px] pb-[11px]`}>
        <p className="w-full pt-4 pb-5 pr-3 text-[45px] leading-[53px] text-[#f6f8f7]">{m.text}</p>
        {meta}
        {m.tail && <Tail mine={mine} />}
      </div>
    );
  }

  return (
    <div className={`${shell} flex items-end pl-[29px] pr-[25px] ${mine ? 'gap-[25px]' : 'gap-10'}`}>
      <p className="pt-4 pb-[22px] text-[45px] leading-[53px] text-[#f6f8f7]">{m.text}</p>
      <div className={mine ? 'pb-[11px]' : 'pb-2'}>{meta}</div>
      {m.tail && <Tail mine={mine} />}
    </div>
  );
};

const DayPill = ({ label }: { label: string }) => (
  <div className="h-[75px] px-[25px] pt-1 flex items-center rounded-[20px] bg-[#12181c] text-[36px] font-medium text-[#8c9195]">
    {label}
  </div>
);

const StatusBar = () => (
  <div className="h-[94px] px-20 flex items-center justify-between text-[#ededed]">
    <div className="flex items-center">
      <span className="text-[40px] leading-none">10:47</span>
      <svg className="w-[34px] h-[34px] ml-3.5" viewBox="0 0 34 34" fill="none" stroke="currentColor" strokeWidth="2.600" aria-hidden="true">
        <circle cx="17" cy="18" r="4.500" />
        <circle cx="17" cy="4.800" r="3.500" />
        <circle cx="4.500" cy="13.500" r="3.500" />
        <circle cx="29.500" cy="13.500" r="3.500" />
        <circle cx="9.500" cy="29" r="3.500" />
        <circle cx="24.500" cy="29" r="3.500" />
        <path d="M17 8.300V13.500M8 14.500L12.500 16.500M26 14.500L21.500 16.500M11.500 26L14.500 22M22.500 26L19.500 22" />
      </svg>
      <svg className="w-9 h-9 ml-3" viewBox="0 0 36 36" aria-hidden="true">
        <path fill="currentColor" d="M18 1C8 1 .5 7.500 .5 17C.5 23 3 27 7.500 30C8 32 7 34 6 36C10 36 13 34.500 15.500 32.500C27 34 35.500 27 35.500 17C35.500 7.500 28 1 18 1Z" />
        <g fill="#0b1014">
          <circle cx="9" cy="17" r="2.600" />
          <circle cx="18" cy="17" r="2.600" />
          <circle cx="27" cy="17" r="2.600" />
        </g>
      </svg>
      <svg className="w-6 h-[34px] ml-[17px]" viewBox="0 0 24 34" aria-hidden="true">
        <path fill="currentColor" d="M7.500 1.500Q7.500 .5 9 .5H15Q16.500 .5 16.500 1.500V4.500H19Q23 5 23 9V29Q23 33 19 33H5Q1 33 1 29V9Q1 5 5 4.500H7.500Z" />
        <path stroke="#0b1014" strokeWidth="3" strokeLinecap="round" d="M12 10.500V19.500M12 25.500V26" />
      </svg>
      <svg className="w-[30px] h-10 ml-[21px]" viewBox="0 0 30 40" fill="none" stroke="currentColor" strokeWidth="6.500" aria-hidden="true">
        <circle cx="15" cy="15" r="11.200" />
        <path d="M3.500 39.500V15" />
      </svg>
      <svg className="w-[34px] h-[34px] ml-4" viewBox="0 0 34 34" fill="none" stroke="currentColor" strokeWidth="2.800" strokeLinecap="round" aria-hidden="true">
        <path d="M13 2.500A15 15 0 1 0 30 24M31.800 18A15 15 0 0 0 20 2.300" />
        <path d="M16 12.500C22 10 26 15 23.500 19.500C21 24 14 23.500 12 17.500M8.500 17.500L11.500 14.500L16 17.500Z" />
        <path d="M17 17C17 19 19 19.500 20 18" />
      </svg>
    </div>
    <div className="flex items-center">
      <svg className="w-[30px] h-[30px]" viewBox="0 0 30 30" aria-hidden="true">
        <g stroke="currentColor" strokeWidth="4" strokeLinecap="round" fill="none">
          <path d="M2.500 6L6 2.500M27.500 6L24 2.500M5.500 25L4 28M24.500 25L26 28" />
        </g>
        <circle cx="15" cy="16" r="13" fill="currentColor" />
        <path d="M15 9V17H20.500" stroke="#0b1014" strokeWidth="2.800" fill="none" strokeLinecap="round" />
      </svg>
      <svg className="w-11 h-9 ml-[15px]" viewBox="0 0 44 36" fill="none" stroke="currentColor" strokeWidth="3" strokeLinecap="round" aria-hidden="true">
        <path d="M1.500 10.500C11 .5 27 .5 36.500 10.500M7 16.500C14 9.500 24 9.500 31 16.500M12.500 22C16.500 18.500 21.500 18.500 25.500 22" />
        <circle cx="19" cy="27" r="2.200" fill="currentColor" stroke="none" />
        <path d="M29 24V33M25.500 30L29 33.500L32.500 30M39.500 31V21M36 24L39.500 20.500L43 24" />
      </svg>
      <svg className="w-9 h-12 ml-[9px]" viewBox="0 0 36 48" aria-label="VoLTE">
        <text x="0" y="21" fontSize="18" fontWeight="700" fill="currentColor">Vo</text>
        <path d="M23 11.500Q25 15 23 19.500M27 8.500Q31.500 15 27 22.500" fill="none" stroke="currentColor" strokeWidth="2.200" strokeLinecap="round" />
        <text x="0" y="40" fontSize="18" fontWeight="700" fill="currentColor">LTE</text>
      </svg>
      <svg className="w-7 h-8 ml-2" viewBox="0 0 28 32" stroke="currentColor" strokeWidth="3.600" strokeLinecap="round" aria-hidden="true">
        <path d="M2 26V29.500M8 20V29.500M14 14V29.500M20 8V29.500M26 2V29.500" />
      </svg>
      <span className="ml-[15px] text-[43px] leading-none">8%</span>
      <svg className="w-[22px] h-8 ml-2" viewBox="0 0 22 32" aria-hidden="true">
        <path fill="#5f6365" d="M6 2Q6 0 8 0H14Q16 0 16 2V4H18Q22 4 22 8V28H0V8Q0 4 4 4H6Z" />
        <path fill="#e8663d" d="M0 27H22V28Q22 32 18 32H4Q0 32 0 28Z" />
      </svg>
    </div>
  </div>
);

const ChatHeader = () => (
  <header className="h-[138px] pl-6 pr-14 pb-4 flex items-center border-b-2 border-[#161c1f] text-[#f7f8fa]">
    <button type="button" aria-label="Back">
      <svg className="w-[45px] h-[46px]" viewBox="0 0 45 46" fill="none" stroke="currentColor" strokeWidth="5" aria-hidden="true">
        <path d="M45 23H4M24 2L4 23L24 44" />
      </svg>
    </button>
    <div className="ml-[11px] w-[98px] h-[98px] rounded-full bg-[#1487ea] flex items-center justify-center pb-1.5">
      <span className="font-['Lato'] text-[24px] font-bold text-white">Laptab</span>
    </div>
    <h1 className="ml-6 flex-1 text-[48px] leading-[60px]">laptabpk</h1>
    <button type="button" aria-label="Catalogue">
      <svg className="w-[52px] h-[48px]" viewBox="0 0 52 48" fill="none" stroke="currentColor" strokeWidth="5" strokeLinecap="round" strokeLinejoin="round" aria-hidden="true">
        <path d="M6.500 3.500H45.500" strokeWidth="5.500" />
        <path d="M8 12.500H44L49 27H3ZM6 27V44.500H28.500V27M46 28V45.500" />
      </svg>
    </button>
    <button type="button" aria-label="Call" className="ml-[70px] flex items-center gap-2">
      <svg className="w-12 h-12" viewBox="0 0 48 48" fill="none" stroke="currentColor" strokeWidth="5" strokeLinejoin="round" aria-hidden="true">
        <path d="M3.500 3.500H15L17 14L9.500 21.500C14 30 19 34.500 27 38.500L34 31.500L45 34V45C23 45 3.500 26 3.500 3.500Z" />
      </svg>
      <svg className="w-[18px] h-3" viewBox="0 0 18 12" fill="currentColor" aria-hidden="true">
        <path d="M2 0H16Q19 1 17.500 4L10.500 11.500Q9 13 7.500 11.500L.5 4Q-1 1 2 0Z" />
      </svg>
    </button>
    <button type="button" aria-label="More options" className="ml-[77px]">
      <svg className="w-3 h-[47px]" viewBox="0 0 12 47" fill="currentColor" aria-hidden="true">
        <circle cx="6" cy="6" r="6" />
        <circle cx="6" cy="23.500" r="6" />
        <circle cx="6" cy="41" r="6" />
      </svg>
    </button>
  </header>
);

const Composer = () => (
  <form className="relative pl-3.5 pr-3 pb-3 flex items-center gap-[13px]" onSubmit={(e) => e.preventDefault()}>
    <div className="flex-1 min-w-0 h-[132px] pl-[31px] pr-[39px] flex items-center rounded-full bg-[#1f2629] text-[#8b9296]">
      <button type="button" aria-label="Stickers">
        <svg className="w-14 h-[58px]" viewBox="0 0 56 58" fill="none" stroke="currentColor" strokeWidth="5.500" strokeLinejoin="round" aria-hidden="true">
          <path d="M20 3H36Q53 3 53 20V30C53 36 51 41 47 45L40 51C36 54 32 55 26 55H20Q3 55 3 38V20Q3 3 20 3Z" />
          <path d="M31 54V46Q32 33 44 32.500H53" />
          <path fill="currentColor" stroke="none" d="M15 32.500H38Q34 34 32 41.500Q18 43 15 34Z" />
          <circle cx="18" cy="20.500" r="4.500" fill="currentColor" stroke="none" />
          <circle cx="38" cy="20.500" r="4.500" fill="currentColor" stroke="none" />
        </svg>
      </button>
      <span className="ml-[34px] w-1.5 h-[68px] shrink-0 bg-[#21c063]" aria-hidden="true" />
      <input
        type="text"
        aria-label="Message"
        placeholder="Message"
        className="flex-1 min-w-0 -ml-1.5 bg-transparent outline-none text-[51px] leading-[60px] text-white placeholder:text-[#8b9296] placeholder:opacity-100"
      />
      <button type="button" aria-label="Attach">
        <svg className="w-9 h-[58px]" viewBox="0 0 36 58" fill="none" stroke="currentColor" strokeWidth="5" strokeLinecap="round" aria-hidden="true">
          <path d="M33.500 14V40A15.500 15.500 0 0 1 2.500 40V13A10.500 10.500 0 0 1 23.500 13V39A5 5 0 0 1 13.500 39V14" />
        </svg>
      </button>
      <button type="button" aria-label="Camera" className="ml-[84px]">
        <svg className="w-[58px] h-[52px]" viewBox="0 0 58 52" fill="none" stroke="currentColor" strokeWidth="5.500" strokeLinejoin="round" aria-hidden="true">
          <path d="M3 8.500H16L21 3H37L42 8.500H55V49H3Z" />
          <circle cx="29" cy="28.500" r="10.500" />
        </svg>
      </button>
    </div>
    <button type="button" aria-label="Record voice message" className="w-[132px] h-[132px] rounded-full bg-[#21c063] flex items-center justify-center text-[#0b1014] shadow-lg">
      <svg className="w-10 h-14" viewBox="0 0 40 56" aria-hidden="true">
        <rect x="11" y="0" width="18" height="36" rx="9" fill="currentColor" />
        <path d="M3 29A17 16 0 0 0 37 29M20 45V53" fill="none" stroke="currentColor" strokeWidth="5.500" strokeLinecap="round" />
      </svg>
    </button>
  </form>
);

const App: React.FC = () => {
  return (
    <div className="min-h-screen flex flex-col bg-[#0b1014] font-['Roboto',sans-serif]">
      <StatusBar />
      <ChatHeader />

      {/* Conversation */}
      <main className="relative flex-1 flex flex-col overflow-hidden">
        <Wallpaper />
        <div className="relative flex-1 px-12 pt-4 pb-10 flex flex-col">
          {MESSAGES.map((m) => (
            <Bubble key={m.id} m={m} />
          ))}
          <div className="mt-[30px] mb-0.5 flex justify-center">
            <DayPill label="Sunday" />
          </div>
          <Bubble m={LAST_MESSAGE} />
          <button
            type="button"
            aria-label="Scroll to bottom"
            className="absolute right-[35px] bottom-14 w-[90px] h-[90px] rounded-full bg-[#263038] flex items-center justify-center text-[#9ba0a3] shadow-md"
          >
            <svg className="w-8 h-[38px]" viewBox="0 0 32 38" fill="none" stroke="currentColor" strokeWidth="5" strokeLinecap="round" aria-hidden="true">
              <path d="M3 3.500L16 16L29 3.500M3 21L16 34L29 21" />
            </svg>
          </button>
        </div>

        {/* Floating date */}
        <div className="absolute top-[7px] inset-x-0 flex justify-center">
          <DayPill label="Saturday" />
        </div>

        <Composer />
      </main>

      <div className="h-[42px] pt-4 flex justify-center">
        <div className="w-[324px] h-[11px] rounded-full bg-[#636769]" />
      </div>
    </div>
  );
};

export default App;
